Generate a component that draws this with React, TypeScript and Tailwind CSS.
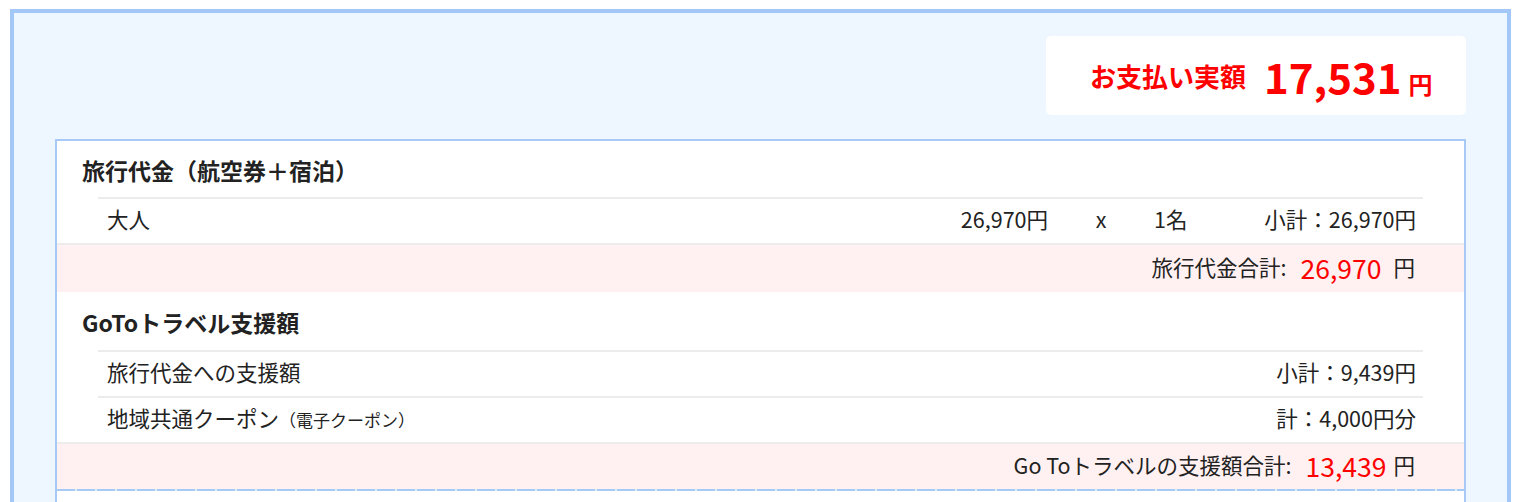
import React from 'react'

const font = { fontFamily: '"Noto Sans CJK JP", "Noto Sans", sans-serif' }

interface Line {
  label: React.ReactNode
  right: React.ReactNode
}

const DetailRow: React.FC<Line> = ({ label, right }) => (
  <div className="flex items-center h-[46px] pb-[3px] border-t-2 border-[#ececec] pl-[9px] pr-[7px] text-[21.5px] text-[#222]">
    <div className="flex-1">{label}</div>
    {right}
  </div>
)

const TotalRow: React.FC<{ label: string; amount: string; gap: string; height: string; dashed?: boolean }> = ({
  label,
  amount,
  gap,
  height,
  dashed
}) => (
  <div className="border-t-2 border-[#ececec] bg-[#fff1f1]">
    <div className={`flex items-center justify-end ${height} pb-[2px] pr-[49px] text-[21.5px] text-[#222]`}>
      <span>{label}</span>
      <span className="ml-[14px] text-[26.5px] text-[#ff0000]">{amount}</span>
      <span className={gap}>円</span>
    </div>
    {dashed && (
      <div className="h-[2px] bg-[repeating-linear-gradient(90deg,#a6c9f6_0_18px,#e4eefb_18px_20px)]" />
    )}
  </div>
)

export default function App() {
  return (
    <div className="w-[1525px] min-h-[502px] bg-white pt-[9px] pl-[10px]" style={font}>
      <div className="w-[1501px] border-4 border-[#a3c8f7] bg-[#eef6ff] px-[41px] pt-[23px]">
        <div className="flex justify-end">
          <div className="w-[420px] h-[79px] bg-white rounded-[5px] flex items-center pl-[44px] text-[#ff0000] font-bold">
            <span className="text-[26px] leading-none">お支払い実額</span>
            <span className="ml-[18px] flex items-baseline">
              <span className="text-[42px] leading-none">17,531</span>
              <span className="ml-[7px] text-[24px] leading-none">円</span>
            </span>
          </div>
        </div>

        <div className="mt-[24px] border-2 border-[#a6c9f6] bg-white">
          <h3 className="pl-[25px] pt-[13px] pb-[11px] leading-[32px] text-[23px] font-bold text-[#222]">
            旅行代金（航空券＋宿泊）
          </h3>
          <div className="mx-[41px]">
            <DetailRow
              label="大人"
              right={
                <div className="flex items-center">
                  <span>26,970円</span>
                  <span className="w-[106px] text-center">x</span>
                  <span className="w-[70px]">1名</span>
                  <span className="w-[192px] text-right">小計：26,970円</span>
                </div>
              }
            />
          </div>
          <TotalRow label="旅行代金合計:" amount="26,970" gap="ml-[12px]" height="h-[47px]" />

          <h3 className="pl-[25px] pt-[14px] pb-[12px] leading-[32px] text-[23px] font-bold text-[#222]">
            GoToトラベル支援額
          </h3>
          <div className="mx-[41px]">
            <DetailRow label="旅行代金への支援額" right={<span>小計：9,439円</span>} />
            <DetailRow
              label={
                <>
                  地域共通クーポン<span className="text-[17px]">（電子クーポン）</span>
                </>
              }
              right={<span>計：4,000円分</span>}
            />
          </div>
          <TotalRow label="Go Toトラベルの支援額合計:" amount="13,439" gap="ml-[7px]" height="h-[45px]" dashed />
          <div className="h-[20px]" />
        </div>
      </div>
    </div>
  )
}
